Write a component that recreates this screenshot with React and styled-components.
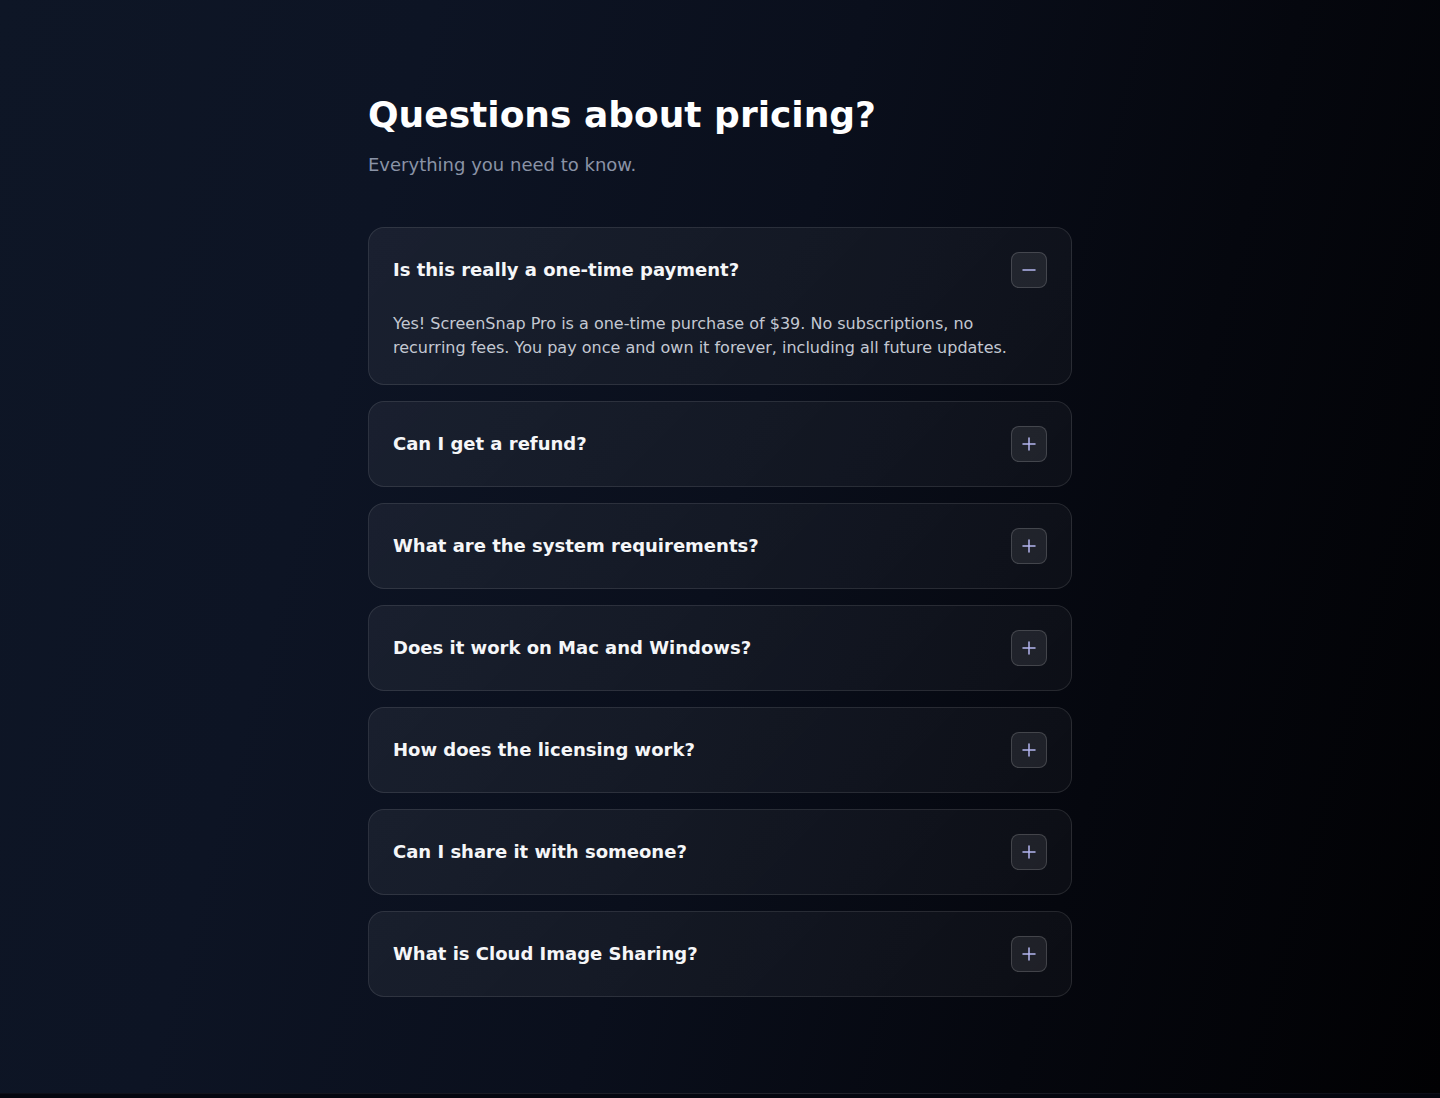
import React, { useState } from "react";
import styled, { createGlobalStyle } from "styled-components";

const Global = createGlobalStyle`
  html, body { margin: 0; padding: 0; }
  body {
    font-family: "DejaVu Sans", "Noto Sans", sans-serif;
    background: #04060f;
  }
  * { box-sizing: border-box; }
`;

const Page = styled.div`
  min-height: 1098px;
  display: flex;
  flex-direction: column;
  background: linear-gradient(105deg, #0e1626 0%, #0d1424 25%, #0a0f1c 50%, #05070e 75%, #010103 100%);
`;

const Section = styled.section`
  padding: 93px 0 96px;
  display: flex;
  justify-content: center;
`;

const Inner = styled.div`
  width: 704px;
  display: flex;
  flex-direction: column;
`;

const Title = styled.h2`
  margin: 0;
  font-size: 36px;
  line-height: 44px;
  font-weight: 700;
  color: #ffffff;
`;

const Subtitle = styled.p`
  margin: 14px 0 0;
  font-size: 18px;
  line-height: 28px;
  color: #8a93a6;
`;

const List = styled.div`
  margin-top: 48px;
  display: flex;
  flex-direction: column;
  gap: 16px;
`;

const Card = styled.div`
  border-radius: 16px;
  border: 1px solid rgba(255, 255, 255, 0.1);
  background: linear-gradient(135deg, rgba(255, 255, 255, 0.055), rgba(255, 255, 255, 0.03));
`;

const Header = styled.button`
  all: unset;
  box-sizing: border-box;
  width: 100%;
  padding: 24px;
  display: flex;
  align-items: center;
  justify-content: space-between;
  cursor: pointer;
`;

const Question = styled.span`
  font-size: 18px;
  line-height: 28px;
  font-weight: 700;
  color: #f5f6f8;
`;

const Toggle = styled.span`
  width: 36px;
  height: 36px;
  flex-shrink: 0;
  border-radius: 8px;
  border: 1px solid rgba(255, 255, 255, 0.16);
  background: rgba(255, 255, 255, 0.08);
  display: flex;
  align-items: center;
  justify-content: center;
  color: #b4b6f0;
`;

const Answer = styled.p`
  margin: 0;
  padding: 0 24px 24px;
  font-size: 16px;
  line-height: 24px;
  color: #c3c8d2;
`;

const Footer = styled.div`
  flex: 1;
  min-height: 6px;
  background: #04060f;
  &::before {
    content: "";
    display: block;
    height: 1px;
    background: linear-gradient(90deg, rgba(255,255,255,0.03), rgba(255,255,255,0.12) 55%, rgba(255,255,255,0.03));
  }
`;

const Icon = ({ open }) => (
  <svg width="18" height="18" viewBox="0 0 18 18" fill="none" stroke="currentColor" strokeWidth="1.5" strokeLinecap="round">
    <line x1="3" y1="9" x2="15" y2="9" />
    {!open && <line x1="9" y1="3" x2="9" y2="15" />}
  </svg>
);

const faqs = [
  {
    q: "Is this really a one-time payment?",
    a: "Yes! ScreenSnap Pro is a one-time purchase of $39. No subscriptions, no recurring fees. You pay once and own it forever, including all future updates.",
  },
  { q: "Can I get a refund?", a: "Yes, we offer a 30-day money-back guarantee." },
  { q: "What are the system requirements?", a: "macOS 12+ or Windows 10+." },
  { q: "Does it work on Mac and Windows?", a: "Yes, it works on both." },
  { q: "How does the licensing work?", a: "One license per user." },
  { q: "Can I share it with someone?", a: "Licenses are personal." },
  { q: "What is Cloud Image Sharing?", a: "Upload screenshots and share a link." },
];

export default function App() {
  const [open, setOpen] = useState(0);
  return (
    <>
      <Global />
      <Page>
        <Section>
          <Inner>
            <Title>Questions about pricing?</Title>
            <Subtitle>Everything you need to know.</Subtitle>
            <List>
              {faqs.map((f, i) => (
                <Card key={f.q}>
                  <Header onClick={() => setOpen(open === i ? -1 : i)}>
                    <Question>{f.q}</Question>
                    <Toggle>
                      <Icon open={open === i} />
                    </Toggle>
                  </Header>
                  {open === i && <Answer>{f.a}</Answer>}
                </Card>
              ))}
            </List>
          </Inner>
        </Section>
        <Footer />
      </Page>
    </>
  );
}
